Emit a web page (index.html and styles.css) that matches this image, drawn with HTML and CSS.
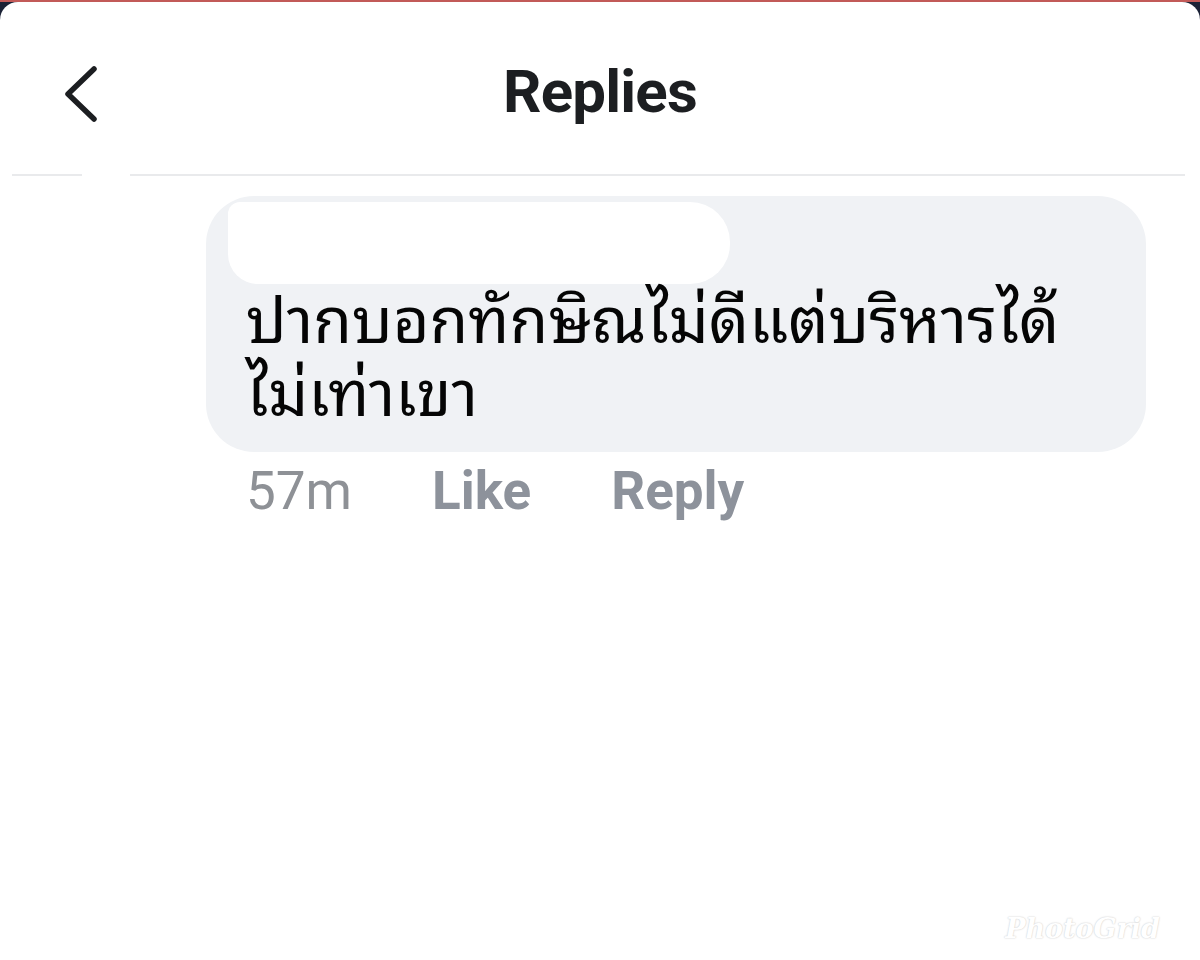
FILE: index.html
```html
<!DOCTYPE html>
<html lang="th">
<head>
<meta charset="utf-8">
<title>Replies</title>
<link rel="stylesheet" href="styles.css">
</head>
<body>
<div class="topline"></div>
<div class="sheet">
  <header class="header">
    <button class="back" aria-label="Back">
      <svg width="40" height="60" viewBox="0 0 40 60">
        <polyline points="32,5 6,30 32,55" fill="none" stroke="#1c1e21" stroke-width="5.5" stroke-linecap="round" stroke-linejoin="round"/>
      </svg>
    </button>
    <h1 class="title">Replies</h1>
  </header>
  <div class="divider">
    <span class="seg seg-a"></span>
    <span class="seg seg-b"></span>
  </div>
  <section class="comment">
    <div class="bubble">
      <div class="name-blur"></div>
      <p class="text">ปากบอกทักษิณไม่ดีแต่บริหารได้ ไม่เท่าเขา</p>
    </div>
    <div class="actions">
      <span class="time">57m</span>
      <span class="act">Like</span>
      <span class="act">Reply</span>
    </div>
  </section>
  <div class="watermark">PhotoGrid</div>
</div>
</body>
</html>
```

FILE: styles.css
```css
* { box-sizing: border-box; }
html, body { margin: 0; padding: 0; }
body {
  width: 1200px;
  height: 960px;
  background: #1b2236;
  overflow: hidden;
  font-family: Roboto, "Liberation Sans", sans-serif;
}
.topline {
  height: 2px;
  background: #c25a58;
}
.sheet {
  position: relative;
  height: 958px;
  background: #ffffff;
  border-radius: 18px 18px 0 0;
}
.header {
  position: relative;
  height: 172px;
  display: flex;
  align-items: center;
  justify-content: center;
}
.back {
  position: absolute;
  left: 62px;
  top: 62px;
  width: 40px;
  height: 60px;
  padding: 0;
  border: 0;
  background: none;
}
.back svg { display: block; }
.title {
  margin: 0;
  margin-top: 6px;
  font-size: 60px;
  font-weight: 700;
  color: #1c1e21;
  letter-spacing: -0.8px;
}
.divider {
  display: flex;
  gap: 48px;
  padding: 0 15px 0 12px;
  height: 2px;
}
.seg { height: 2px; background: #e9eaec; }
.seg-a { width: 70px; }
.seg-b { flex: 1; }
.comment {
  padding: 20px 54px 0 206px;
}
.bubble {
  position: relative;
  height: 256px;
  background: #f0f2f5;
  border-radius: 48px;
  padding: 82px 40px 0 40px;
}
.name-blur {
  position: absolute;
  left: 22px;
  top: 6px;
  width: 502px;
  height: 82px;
  background: #ffffff;
  border-radius: 12px 40px 40px 30px;
}
.text {
  position: relative;
  margin: 0;
  font-family: "Noto Sans Thai Looped", "Noto Serif Thai", "Loma", "Garuda", "Waree", "Tlwg Typo", "Noto Sans Thai", "Noto Sans", sans-serif;
  font-size: 63px;
  line-height: 73px;
  color: #050505;
  width: 860px;
}
.actions {
  display: flex;
  align-items: baseline;
  gap: 80px;
  padding: 3px 0 0 40px;
  font-size: 53px;
  line-height: 72px;
}
.time { color: #8e9196; font-weight: 400; }
.act { color: #8d929b; font-weight: 700; }
.watermark {
  position: absolute;
  right: 40px;
  bottom: 16px;
  font-family: "DejaVu Serif", serif;
  font-style: italic;
  font-weight: 700;
  font-size: 27px;
  color: #ffffff;
  text-shadow: 0 0 2px #d0d0d0, 0 0 1px #dcdcdc;
}
```
